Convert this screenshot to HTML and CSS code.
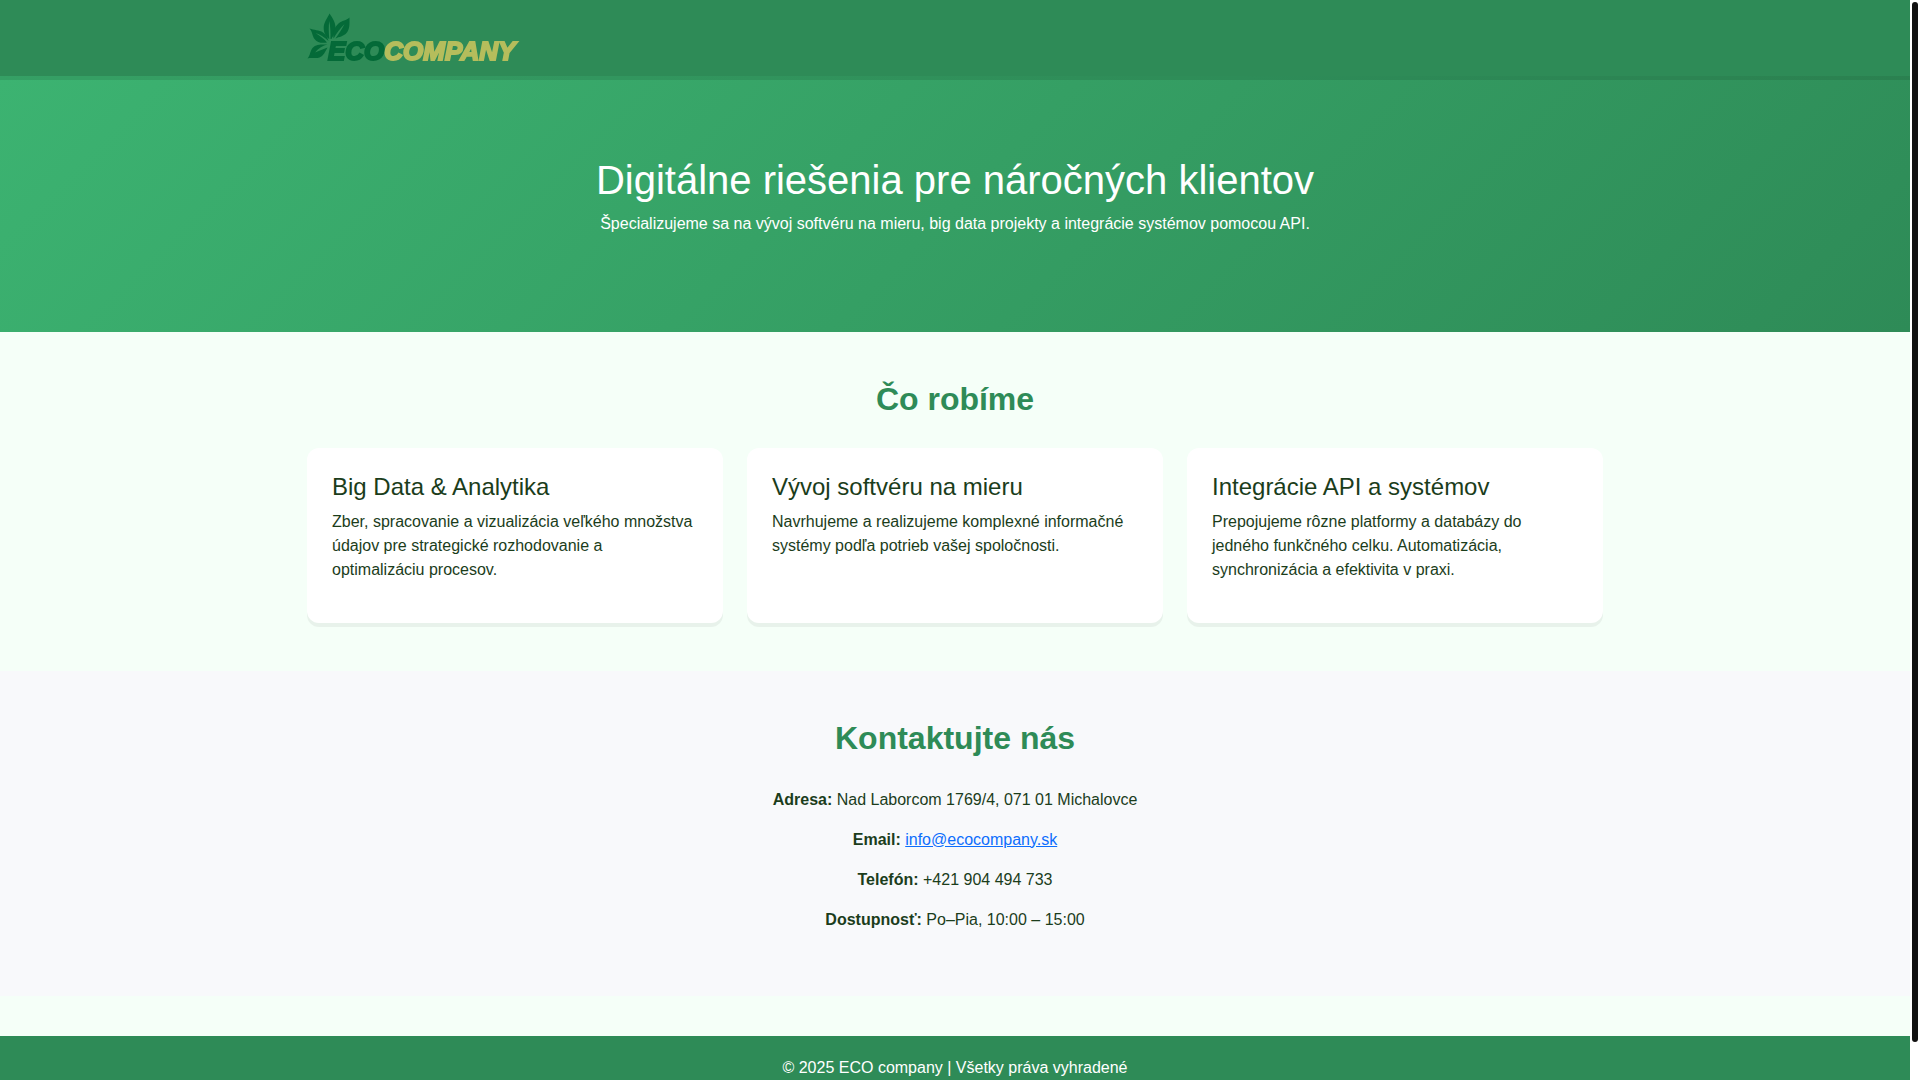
FILE: index.html
```html
<!DOCTYPE html>
<html lang="sk">
<head>
  <meta charset="utf-8">
  <meta name="viewport" content="width=device-width, initial-scale=1">
  <title>ECO company</title>
  <link rel="stylesheet" href="styles.css">
</head>
<body>
  <div class="view">
    <header class="navbar">
      <div class="container">
        <a class="brand" href="#" aria-label="ECO company">
          <svg class="logo" width="220" height="60" viewBox="0 0 220 60" aria-hidden="true">
            <g class="leaves" transform="translate(-4 5)">
              <path d="M26.500 0.500C29.500 5 32.500 9 32.500 15C32.500 20 30 23 28.500 26L27.500 26C27.600 20 27.400 13 26.200 8C25.600 13 25.600 19 26.300 26C23 24 20.500 20 20.700 14C21 9 24.500 5 26.500 0.500Z"/>
              <path d="M46.500 4.500C46.500 11 47 16 43.500 20C40.500 23.500 36 23.700 32.500 25.500C35.500 21 39.500 15.500 41.500 11C37.500 15 33.500 20 30.600 25.500C29.500 20 31.500 14 35.500 10.500C39 7.500 43.500 7.500 46.500 4.500Z"/>
              <path d="M6.500 15.500C11 17.500 16 16.500 20 19.500C23.500 22 24.500 25 25.500 28C21 24 17 21.500 12.500 20C17 23 21 25.500 24 29.500C19 30.500 14 29.500 11.500 26C9 22.500 9.500 18.500 6.500 15.500Z"/>
              <path d="M24.500 31.500C20 32.500 15.500 35 12 39.500C16 38 20.500 36 24.500 34.500C22 39 20.500 43 16.500 44.500C12.500 46 8.500 44 4.500 45.500C7.500 42 7 38 9.500 35C13 31 19 31.500 24.500 31.500Z"/>
            </g>
            <text class="wordmark" x="21" y="52"><tspan class="word-eco">ECO</tspan><tspan class="word-company">COMPANY</tspan></text>
          </svg>
        </a>
      </div>
    </header>

    <main>
      <section class="hero">
        <div class="container">
          <h1>Digitálne riešenia pre náročných klientov</h1>
          <p>Špecializujeme sa na vývoj softvéru na mieru, big data projekty a integrácie systémov pomocou API.</p>
        </div>
      </section>

      <section class="section">
        <div class="container">
          <h2>Čo robíme</h2>
          <div class="cards">
            <article class="card">
              <h3>Big Data &amp; Analytika</h3>
              <p>Zber, spracovanie a vizualizácia veľkého množstva údajov pre strategické rozhodovanie a optimalizáciu procesov.</p>
            </article>
            <article class="card">
              <h3>Vývoj softvéru na mieru</h3>
              <p>Navrhujeme a realizujeme komplexné informačné systémy podľa potrieb vašej spoločnosti.</p>
            </article>
            <article class="card">
              <h3>Integrácie API a systémov</h3>
              <p>Prepojujeme rôzne platformy a databázy do jedného funkčného celku. Automatizácia, synchronizácia a efektivita v praxi.</p>
            </article>
          </div>
        </div>
      </section>

      <section class="section contact">
        <div class="container">
          <h2>Kontaktujte nás</h2>
          <p><strong>Adresa:</strong> Nad Laborcom 1769/4, 071 01 Michalovce</p>
          <p><strong>Email:</strong> <a href="mailto:info@ecocompany.sk">info@ecocompany.sk</a></p>
          <p><strong>Telefón:</strong> +421 904 494 733</p>
          <p><strong>Dostupnosť:</strong> Po–Pia, 10:00 – 15:00</p>
        </div>
      </section>
    </main>

    <footer class="footer">
      <p>© 2025 ECO company | Všetky práva vyhradené</p>
    </footer>
  </div>
  <div class="scrollbar" aria-hidden="true"><div class="thumb"></div></div>
</body>
</html>
```
FILE: styles.css
```css
* {
  box-sizing: border-box;
}

body {
  display: flex;
  height: 100vh;
  margin: 0;
  overflow: hidden;
  background: #f5fff8;
  color: #1b3d1b;
  font-family: "Liberation Sans", Arial, sans-serif;
  font-size: 16px;
  line-height: 1.5;
}

.view {
  flex: 1;
  overflow-y: auto;
  scrollbar-width: none;
}

/* Scroll track */
.scrollbar {
  display: flex;
  width: 10px;
  padding: 2px 2px 38px;
  background: #fff;
}

.thumb {
  flex: 1;
  border-radius: 3px;
  background: #111;
}

h1,
h2,
h3 {
  margin: 0 0 8px;
  font-weight: 500;
  line-height: 1.2;
}

p {
  margin: 0 0 16px;
}

strong {
  font-weight: 700;
}

.container {
  max-width: 1320px;
  margin: 0 auto;
  padding: 0 12px;
}

/* Navigation */
.navbar {
  position: sticky;
  top: 0;
  z-index: 1;
  padding: 8px 0;
  background: #2e8b57;
  box-shadow: 0 4px 0 rgba(0, 0, 0, 0.1);
}

.brand {
  display: inline-block;
  vertical-align: top;
}

.logo {
  display: block;
}

.leaves {
  fill: #046a38;
}

.wordmark {
  font-family: "Liberation Sans", Arial, sans-serif;
  font-size: 26px;
  font-style: italic;
  font-weight: 700;
  stroke-width: 2;
  paint-order: stroke;
}

.word-eco {
  fill: #046a38;
  stroke: #046a38;
}

.word-company {
  fill: #b5bd5c;
  stroke: #b5bd5c;
}

/* Hero */
.hero {
  padding: 80px 0;
  background: linear-gradient(135deg, #3cb371, #2e8b57);
  color: #fff;
  text-align: center;
}

.hero h1 {
  font-size: 40px;
  font-weight: 400;
}

/* Sections */
.section {
  padding: 48px 0;
}

.section h2 {
  margin-bottom: 30px;
  color: #2e8b57;
  font-size: 32px;
  font-weight: 700;
  text-align: center;
}

.cards {
  display: grid;
  grid-template-columns: repeat(3, 1fr);
  gap: 24px;
}

.card {
  padding: 25px;
  border-radius: 12px;
  background: #fff;
  box-shadow: 0 4px 0 rgba(0, 0, 0, 0.05);
}

.card h3 {
  font-size: 24px;
  font-weight: 400;
}

.contact {
  background: #f8f9fb;
  text-align: center;
}

.contact a {
  color: #0d6efd;
}

.footer {
  margin-top: 40px;
  padding: 20px 0;
  background: #2e8b57;
  color: #fff;
  text-align: center;
}

@media (max-width: 768px) {
  .cards {
    grid-template-columns: 1fr;
  }
}
```
